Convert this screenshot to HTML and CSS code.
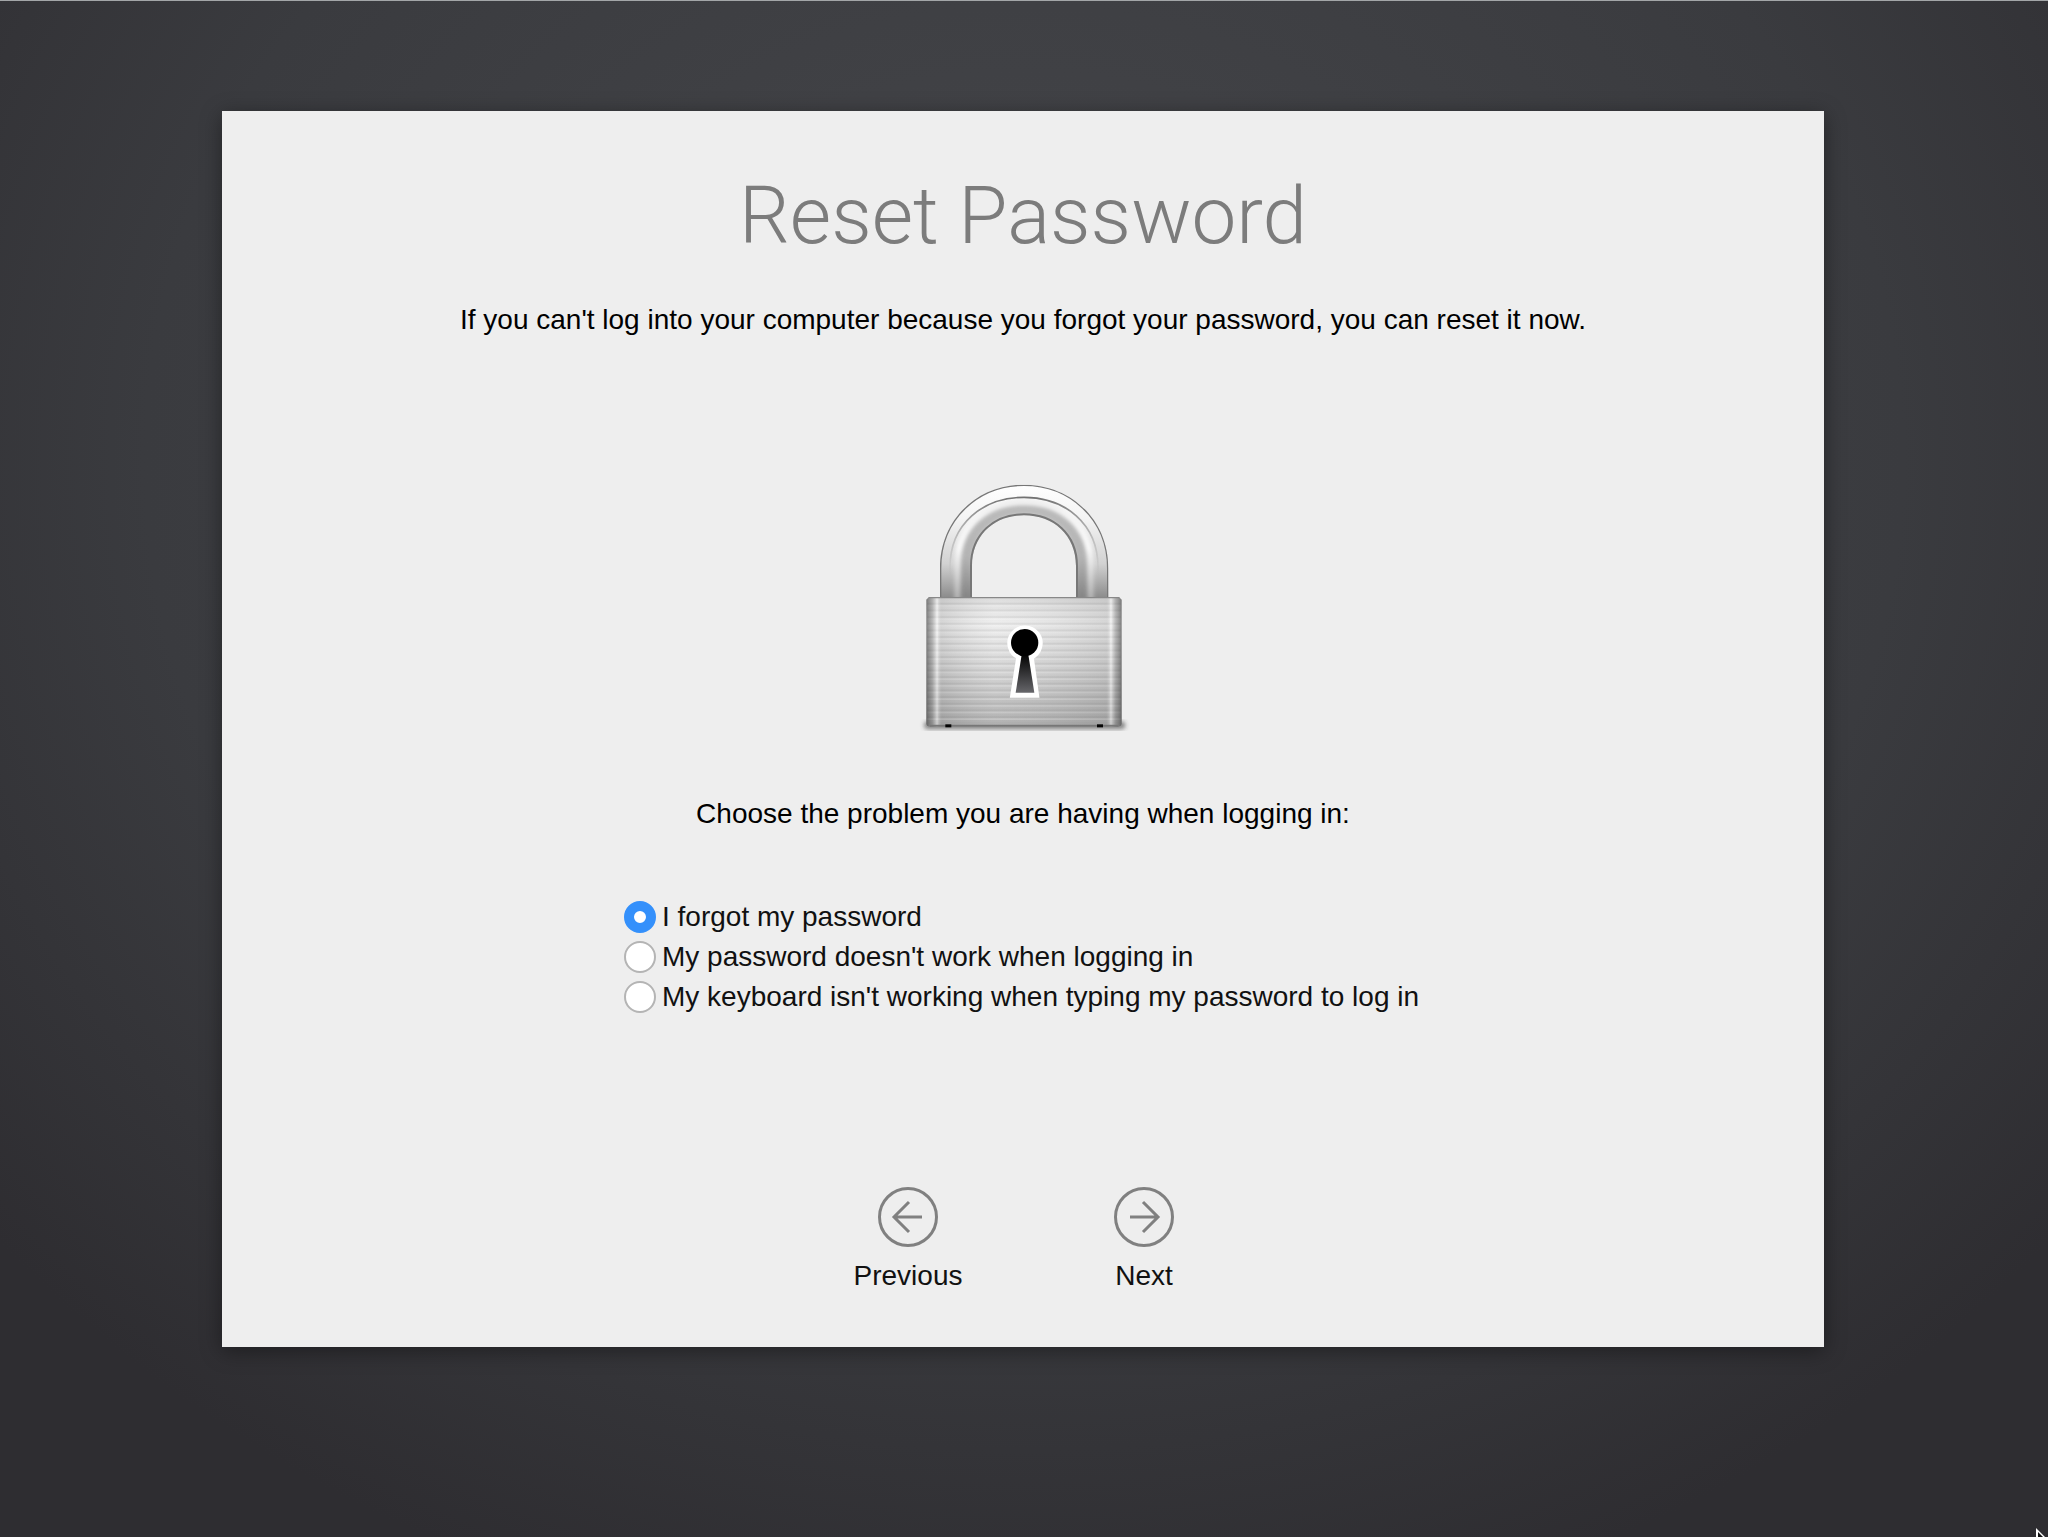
FILE: index.html
```html
<!DOCTYPE html>
<html lang="en">
  <head>
    <meta charset="UTF-8" />
    <meta name="viewport" content="width=device-width, initial-scale=1.0" />
    <title>Reset Password</title>
    <link rel="stylesheet" href="styles.css">
  </head>
  <body>
    <main class="panel">
      <h1>Reset Password</h1>
      <p class="intro">If you can't log into your computer because you forgot your password, you can reset it now.</p>

      <svg class="lock" viewBox="-6 0 750 870" aria-hidden="true">
        <defs>
          <linearGradient id="shackle" x1="0" y1="0" x2="0" y2="1">
            <stop offset="0" stop-color="#ffffff" />
            <stop offset="0.3" stop-color="#f4f4f4" />
            <stop offset="0.7" stop-color="#d2d2d2" />
            <stop offset="1" stop-color="#8c8c8c" />
          </linearGradient>
          <linearGradient id="inner" x1="0" y1="110" x2="0" y2="412" gradientUnits="userSpaceOnUse">
            <stop offset="0" stop-color="#bcbcbc" />
            <stop offset="0.6" stop-color="#b4b4b4" />
            <stop offset="1" stop-color="#858585" />
          </linearGradient>
          <linearGradient id="ridge" x1="0" y1="110" x2="0" y2="412" gradientUnits="userSpaceOnUse">
            <stop offset="0" stop-color="#707070" />
            <stop offset="0.45" stop-color="#a8a8a8" stop-opacity="0.6" />
            <stop offset="0.8" stop-color="#b0b0b0" stop-opacity="0" />
          </linearGradient>
          <linearGradient id="glow" x1="0" y1="120" x2="0" y2="412" gradientUnits="userSpaceOnUse">
            <stop offset="0" stop-color="#f0f0f0" />
            <stop offset="0.5" stop-color="#ffffff" />
            <stop offset="1" stop-color="#b8b8b8" />
          </linearGradient>
          <linearGradient id="body" x1="0" y1="0" x2="0" y2="1">
            <stop offset="0" stop-color="#dadada" />
            <stop offset="0.2" stop-color="#ececec" />
            <stop offset="0.55" stop-color="#d2d2d2" />
            <stop offset="1" stop-color="#a8a8a8" />
          </linearGradient>
          <linearGradient id="sides" x1="0" y1="0" x2="1" y2="0">
            <stop offset="0" stop-color="#333" stop-opacity="0.6" />
            <stop offset="0.03" stop-color="#666" stop-opacity="0.4" />
            <stop offset="0.055" stop-color="#fff" stop-opacity="0.45" />
            <stop offset="0.08" stop-color="#777" stop-opacity="0.18" />
            <stop offset="0.35" stop-color="#fff" stop-opacity="0.1" />
            <stop offset="0.92" stop-color="#777" stop-opacity="0.18" />
            <stop offset="0.945" stop-color="#fff" stop-opacity="0.45" />
            <stop offset="0.97" stop-color="#666" stop-opacity="0.4" />
            <stop offset="1" stop-color="#333" stop-opacity="0.6" />
          </linearGradient>
          <linearGradient id="hole" x1="0" y1="590" x2="0" y2="698" gradientUnits="userSpaceOnUse">
            <stop offset="0" stop-color="#080808" />
            <stop offset="1" stop-color="#66666a" />
          </linearGradient>
          <pattern id="brushed" width="20" height="20" patternUnits="userSpaceOnUse">
            <rect width="20" height="6" y="8" fill="#666" fill-opacity="0.12" />
            <rect width="20" height="5" y="15" fill="#fff" fill-opacity="0.22" />
          </pattern>
          <filter id="soft" x="-20%" y="-20%" width="140%" height="140%">
            <feGaussianBlur stdDeviation="7" />
          </filter>
          <clipPath id="shackleShape">
            <path d="M120 412V325C120 175 235 74 372 74S625 175 625 325V412H528V318C528 225 460 166 372 166S216 225 216 318V412Z" />
          </clipPath>
        </defs>
        <rect x="72" y="784" width="604" height="24" rx="12" fill="#333" opacity="0.55" filter="url(#soft)" />
        <path d="M120 412V325C120 175 235 74 372 74S625 175 625 325V412H528V318C528 225 460 166 372 166S216 225 216 318V412Z" fill="url(#shackle)" />
        <g clip-path="url(#shackleShape)" fill="none">
          <path d="M198 420V318C198 214 270 148 372 148S546 214 546 318V420" stroke="url(#inner)" stroke-width="38" filter="url(#soft)" />
          <path d="M172 420V315C172 200 255 126 372 126S572 200 572 315V420" stroke="url(#glow)" stroke-width="16" filter="url(#soft)" />
          <path d="M150 420V322C150 190 250 112 372 112S594 190 594 322V420" stroke="url(#ridge)" stroke-width="5" />
          <path d="M216 420V318C216 225 284 166 372 166S528 225 528 318V420" stroke="#777" stroke-width="12" />
          <path d="M120 420V325C120 175 235 74 372 74S625 175 625 325V420" stroke="#777" stroke-width="8" />
          <path d="M110 406H640" stroke="#555" stroke-width="12" filter="url(#soft)" />
        </g>
        <path d="M86 412H658L665 419V790Q665 800 655 800H89Q79 800 79 790V419Z" fill="url(#body)" />
        <path d="M82 424H662V790H82Z" fill="url(#brushed)" />
        <path d="M86 412H658L665 419V790Q665 800 655 800H89Q79 800 79 790V419Z" fill="url(#sides)" />
        <path d="M86 413H658" stroke="#888" stroke-width="4" />
        <path d="M90 797H655" stroke="#777" stroke-width="6" />
        <rect x="136" y="793" width="18" height="9" fill="#050505" />
        <rect x="591" y="793" width="18" height="9" fill="#050505" />
        <path d="M358 590A44 44 0 1 1 392 590L408 704H340Z" fill="#fff" stroke="#fff" stroke-width="18" />
        <path d="M365 584H385L403 698H347Z" fill="url(#hole)" />
        <circle cx="374" cy="548" r="41" fill="#000" />
      </svg>

      <form class="problem-form">
        <fieldset>
          <legend>Choose the problem you are having when logging in:</legend>
          <div class="options">
            <label><input type="radio" name="problem" value="forgot" checked />I forgot my password</label>
            <label><input type="radio" name="problem" value="password" />My password doesn't work when logging in</label>
            <label><input type="radio" name="problem" value="keyboard" />My keyboard isn't working when typing my password to log in</label>
          </div>
        </fieldset>
        <div class="nav-buttons">
          <button type="button">
            <svg viewBox="0 0 60 60" aria-hidden="true">
              <circle cx="30" cy="30" r="28.5" />
              <path d="M44 30H16M31 15L16 30L31 45" />
            </svg>
            Previous
          </button>
          <button type="submit">
            <svg viewBox="0 0 60 60" aria-hidden="true">
              <circle cx="30" cy="30" r="28.5" />
              <path d="M16 30H44M29 15L44 30L29 45" />
            </svg>
            Next
          </button>
        </div>
      </form>
    </main>

    <svg class="cursor" viewBox="0 0 12 9" aria-hidden="true">
      <path d="M0 0L12 12H0Z" fill="#fff" />
      <path d="M2 4L8 10H2Z" fill="#111" />
    </svg>
  </body>
</html>
```
FILE: styles.css
```css
* {
  box-sizing: border-box;
}

body {
  margin: 0;
  min-height: 100vh;
  padding: 110px 224px 0 222px;
  border-top: 1px solid #a3a6a8;
  font-family: "Liberation Sans", Arial, sans-serif;
  font-size: 28px;
  line-height: 40px;
  color: #111;
  background: radial-gradient(ellipse 66% 78% at 50% 30%, #46474b 0%, #3a3b3f 65%, #2e2d31 100%);
}

.panel {
  display: flex;
  flex-direction: column;
  align-items: center;
  padding: 49px 24px 51px;
  background-color: #eee;
  box-shadow: 0 4px 20px rgba(0, 0, 0, 0.4);
  text-align: center;
}

h1 {
  margin: 0;
  font-family: Roboto, "Liberation Sans", sans-serif;
  font-size: 80px;
  font-weight: 300;
  line-height: 112px;
  color: #7c7c7c;
}

.intro {
  margin: 28px 0 0;
  color: #000;
}

.lock {
  width: 250px;
  height: 290px;
  margin-top: 120px;
}

.problem-form {
  margin-top: 44px;
}

fieldset {
  margin: 0;
  padding: 0;
  border: none;
}

legend {
  width: 100%;
  padding: 0;
  color: #000;
}

.options {
  width: 798px;
  max-width: 100%;
  padding-top: 63px;
  text-align: left;
}

.options label {
  display: flex;
  align-items: center;
  gap: 6px;
}

.options input {
  appearance: none;
  flex: none;
  width: 32px;
  height: 32px;
  margin: 0;
  border: 2px solid #b4b4b4;
  border-radius: 50%;
  background-color: #fff;
}

.options input:checked {
  border: 10px solid #3490fb;
}

.nav-buttons {
  display: grid;
  grid-template-columns: 236px 236px;
  justify-content: center;
  margin-top: 170px;
  padding-left: 6px;
}

.nav-buttons button {
  display: flex;
  flex-direction: column;
  align-items: center;
  gap: 9px;
  padding: 0;
  border: none;
  background: none;
  font: inherit;
  color: inherit;
  cursor: pointer;
}

.nav-buttons svg {
  width: 60px;
  height: 60px;
  fill: none;
  stroke: #808080;
  stroke-width: 3px;
}

.cursor {
  position: fixed;
  right: 0;
  bottom: 0;
  width: 12px;
  height: 9px;
}
```
